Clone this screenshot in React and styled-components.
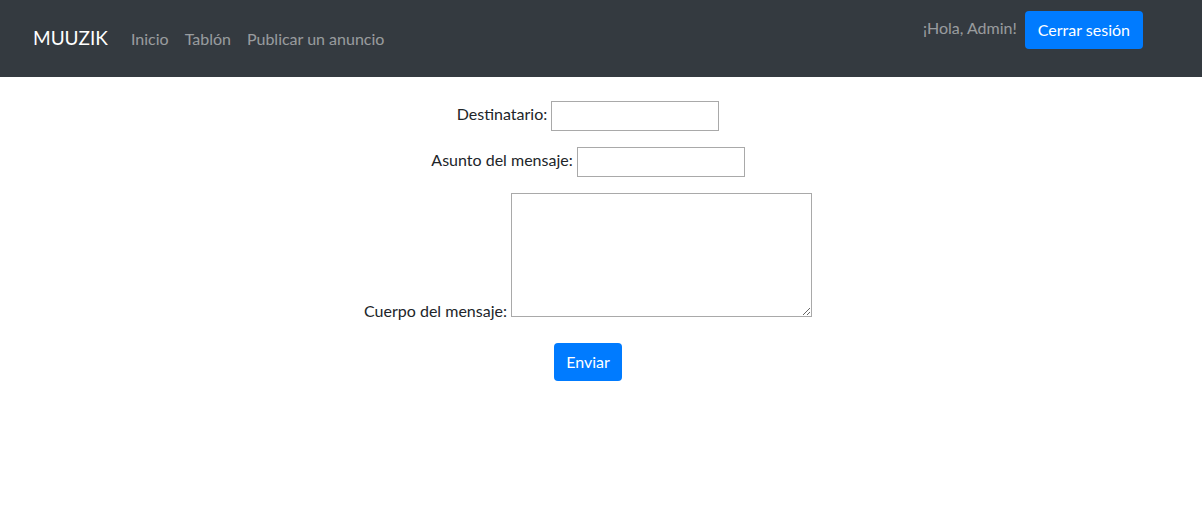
import React from 'react';
import styled, { createGlobalStyle } from 'styled-components';

const GlobalStyle = createGlobalStyle`
  body {
    margin: 0;
    font-family: Lato, "Noto Sans", sans-serif;
    font-size: 16px;
    line-height: 1.5;
    color: #212529;
    background: #fff;
  }
`;

const Navbar = styled.nav`
  display: flex;
  justify-content: space-between;
  align-items: center;
  height: 77px;
  padding: 0 59px 0 33px;
  background: #343a40;
  box-sizing: border-box;
`;

const Left = styled.div`
  display: flex;
  align-items: center;
`;

const Brand = styled.a`
  font-size: 19px;
  color: #fff;
  margin-right: 15px;
  text-decoration: none;
`;

const NavLink = styled.a`
  padding: 8px;
  color: rgba(255, 255, 255, 0.5);
  text-decoration: none;
`;

const Right = styled.div`
  display: flex;
  align-items: flex-start;
  align-self: flex-start;
  padding-top: 11px;
  gap: 8px;
`;

const Greeting = styled.span`
  color: rgba(255, 255, 255, 0.5);
  line-height: 34px;
`;

const Button = styled.button`
  font-family: inherit;
  font-size: 16px;
  line-height: 24px;
  padding: 7px 13px;
  border: none;
  border-radius: 4px;
  background: #007bff;
  color: #fff;
  cursor: pointer;
`;

const SubmitButton = styled(Button)`
  padding: 7px 12px;
  margin-top: 4px;
`;

const Form = styled.form`
  width: 1176px;
  text-align: center;
  padding-top: 24px;
`;

const Row = styled.p`
  margin: 0 0 16px;
`;

const Label = styled.label`
  margin-right: 4px;
`;

const Input = styled.input`
  width: 168px;
  height: 30px;
  box-sizing: border-box;
  border: 1px solid #a9a9a9;
  vertical-align: middle;
  font-family: inherit;
`;

const TextArea = styled.textarea`
  width: 301px;
  height: 124px;
  box-sizing: border-box;
  border: 1px solid #a9a9a9;
  vertical-align: baseline;
  font-family: inherit;
`;

export default function App() {
  return (
    <>
      <GlobalStyle />
      <Navbar>
        <Left>
          <Brand>MUUZIK</Brand>
          <NavLink>Inicio</NavLink>
          <NavLink>Tablón</NavLink>
          <NavLink>Publicar un anuncio</NavLink>
        </Left>
        <Right>
          <Greeting>¡Hola, Admin!</Greeting>
          <Button type="button">Cerrar sesión</Button>
        </Right>
      </Navbar>
      <Form>
        <Row>
          <Label>Destinatario:</Label>
          <Input type="text" />
        </Row>
        <Row>
          <Label>Asunto del mensaje:</Label>
          <Input type="text" />
        </Row>
        <Row>
          <Label>Cuerpo del mensaje:</Label>
          <TextArea />
        </Row>
        <SubmitButton type="button">Enviar</SubmitButton>
      </Form>
    </>
  );
}
